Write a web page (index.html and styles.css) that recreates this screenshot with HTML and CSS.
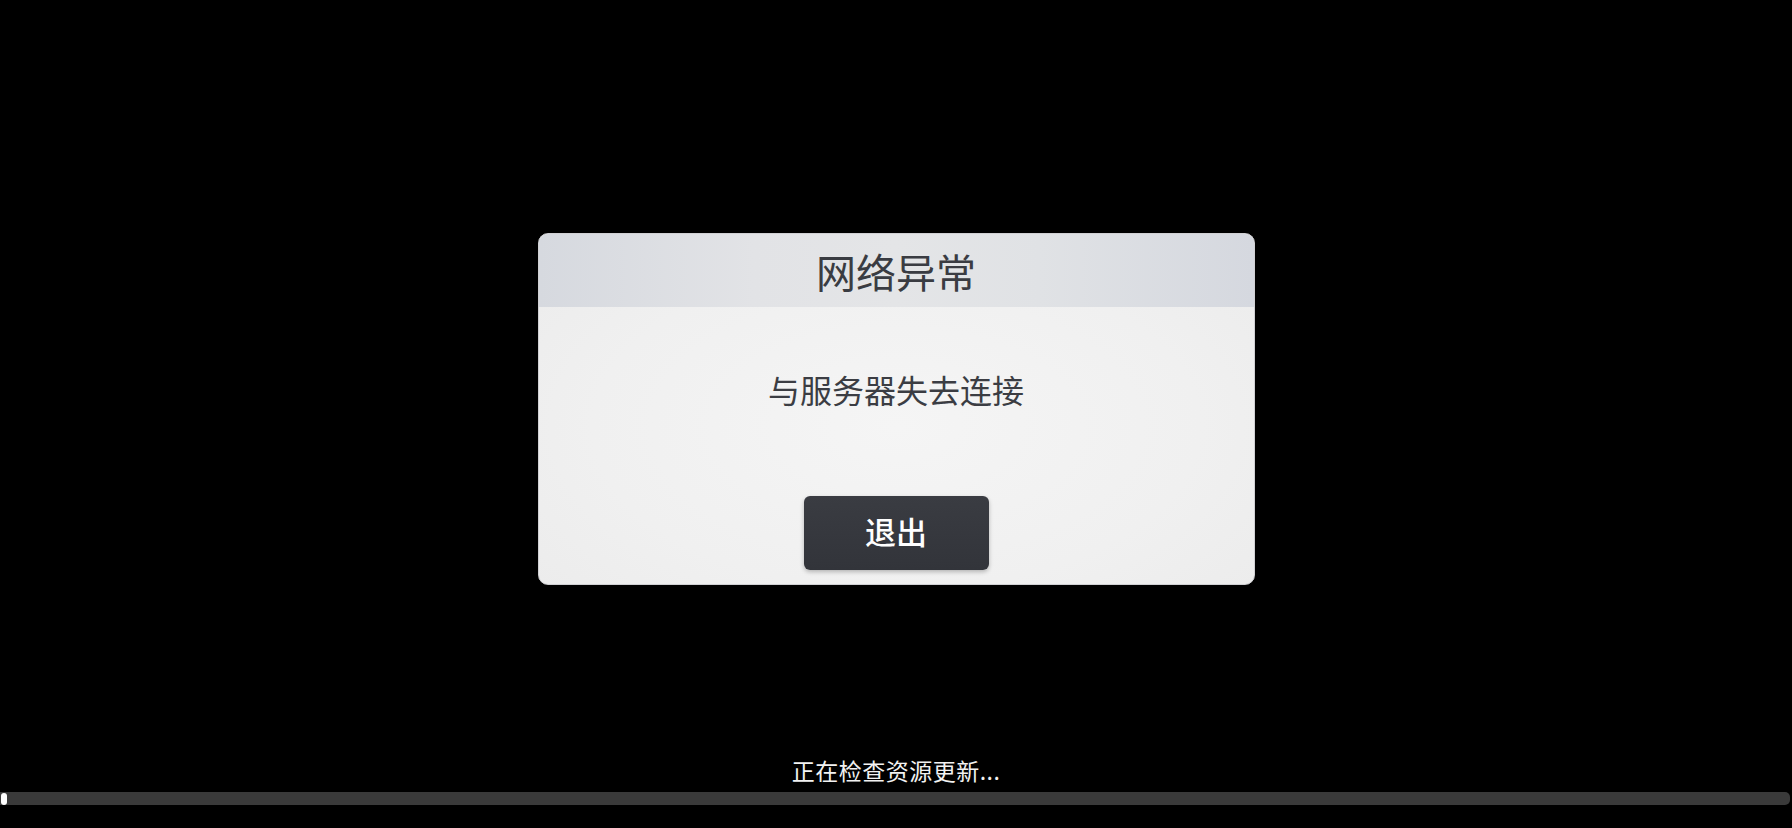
FILE: index.html
```html
<!DOCTYPE html>
<html lang="zh-CN">
<head>
  <meta charset="UTF-8">
  <meta name="viewport" content="width=device-width, initial-scale=1.0">
  <title>网络异常</title>
  <link rel="stylesheet" href="styles.css">
</head>
<body>

  <div class="screen">

    <!-- Dialog -->
    <div class="dialog">
      <div class="dialog-header">
        <h1>网络异常</h1>
      </div>
      <div class="dialog-body">
        <p class="message">与服务器失去连接</p>
        <button class="quit-btn">退出</button>
      </div>
    </div>

    <!-- Loading status -->
    <div class="loading">
      <p class="status">正在检查资源更新...</p>
      <div class="progress">
        <div class="progress-knob"></div>
      </div>
    </div>

  </div>

</body>
</html>
```

FILE: styles.css
```css
* {
  margin: 0;
  padding: 0;
  box-sizing: border-box;
  font-family: "Noto Sans CJK SC", "Noto Sans", sans-serif;
}

body {
  background: #000;
}

.screen {
  height: 828px;
  display: flex;
  flex-direction: column;
  align-items: center;
}

.dialog {
  margin-top: 233px;
  width: 717px;
  height: 352px;
  border-radius: 10px;
  overflow: hidden;
  background: radial-gradient(ellipse at 50% 55%, #f5f5f5 0%, #f0f0f0 60%, #ebebeb 100%);
  border: 1px solid #d0d0d3;
  display: flex;
  flex-direction: column;
}

.dialog-header {
  height: 73px;
  background: linear-gradient(90deg, #d6d9df 0%, #e2e3e6 30%, #e4e5e7 50%, #e0e2e5 70%, #d5d8df 100%);
  display: flex;
  justify-content: center;
  align-items: center;
}

.dialog-header h1 {
  font-size: 40px;
  font-weight: 400;
  color: #3a3c42;
  line-height: 1;
}

.dialog-body {
  flex: 1;
  display: flex;
  flex-direction: column;
  align-items: center;
  padding-top: 62px;
}

.message {
  font-size: 32px;
  line-height: 40px;
  color: #3b3d43;
}

.quit-btn {
  margin-top: 87px;
  width: 185px;
  height: 74px;
  border: none;
  border-radius: 6px;
  background: linear-gradient(180deg, #3a3c42 0%, #32343a 100%);
  box-shadow: 0 2px 4px rgba(0, 0, 0, 0.25);
  color: #fff;
  font-size: 31px;
  font-weight: 500;
  line-height: 1;
  padding-bottom: 6px;
  cursor: pointer;
}

.loading {
  margin-top: auto;
  width: 100%;
  padding-bottom: 23px;
  display: flex;
  flex-direction: column;
  align-items: center;
}

.status {
  color: #f2f2f2;
  font-size: 23px;
  line-height: 30px;
  letter-spacing: 0.5px;
  margin-bottom: 7px;
}

.progress {
  width: 1790px;
  align-self: flex-start;
  height: 13px;
  background: #3a3a3a;
  border-radius: 0 5px 5px 0;
  position: relative;
}

.progress-knob {
  position: absolute;
  left: 1px;
  top: 1px;
  width: 6px;
  height: 12px;
  background: #fff;
  border-radius: 3px;
}
```
